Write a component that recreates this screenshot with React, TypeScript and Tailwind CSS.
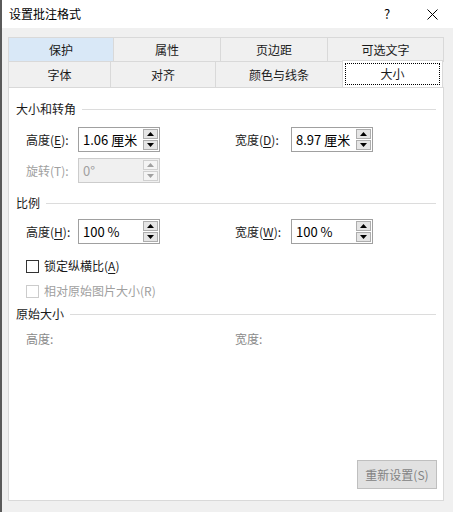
import React from 'react';

const font = { fontFamily: '"Noto Sans CJK SC", "Microsoft YaHei", sans-serif' };

function Spinner({ disabled }: { disabled?: boolean }) {
  const arrow = disabled ? '#a0a0a0' : '#000';
  return (
    <div className="flex flex-col gap-[1px] mr-[1px]">
      {[0, 1].map((i) => (
        <div
          key={i}
          className={`w-[15px] h-[10px] flex items-center justify-center border ${
            disabled ? 'border-[#d0d0d0] bg-[#f4f4f4]' : 'border-[#adadad] bg-[#e5e5e5]'
          }`}
        >
          <svg width="7" height="4" viewBox="0 0 7 4">
            {i === 0 ? (
              <polygon points="3.5,0 7,4 0,4" fill={arrow} />
            ) : (
              <polygon points="0,0 7,0 3.5,4" fill={arrow} />
            )}
          </svg>
        </div>
      ))}
    </div>
  );
}

function SpinInput({ value, disabled }: { value: string; disabled?: boolean }) {
  return (
    <div
      className={`w-[82px] h-[25px] flex items-center justify-between border ${
        disabled ? 'border-[#cccccc] bg-[#f0f0f0] text-[#a0a0a0]' : 'border-[#a0a0a0] bg-white text-black'
      }`}
    >
      <span className="pl-[4px] text-[13px] leading-none">{value}</span>
      <Spinner disabled={disabled} />
    </div>
  );
}

function Label({ text, mn, tail, disabled, w }: { text: string; mn?: string; tail?: string; disabled?: boolean; w: string }) {
  return (
    <span className={`${w} text-[12px] ${disabled ? 'text-[#a0a0a0]' : 'text-[#1a1a1a]'}`}>
      {text}
      {mn && (
        <>
          (<span className="underline underline-offset-2">{mn}</span>):
        </>
      )}
      {tail}
    </span>
  );
}

function GroupHeader({ title }: { title: string }) {
  return (
    <div className="flex items-center gap-[6px] h-[16px]">
      <span className="text-[12px] text-[#1a1a1a]">{title}</span>
      <div className="flex-1 h-px bg-[#dcdcdc]" />
    </div>
  );
}

function Checkbox({ text, mn, disabled }: { text: string; mn?: string; disabled?: boolean }) {
  return (
    <div className="flex items-center gap-[5px] pl-[10px] h-[16px]">
      <div className={`w-[13px] h-[13px] border bg-white ${disabled ? 'border-[#cccccc]' : 'border-[#333333]'}`} />
      <span className={`text-[12px] ${disabled ? 'text-[#a0a0a0]' : 'text-[#1a1a1a]'}`}>
        {text}
        {mn ? (
          <>
            (<span className="underline underline-offset-2">{mn}</span>)
          </>
        ) : null}
      </span>
    </div>
  );
}

const row1 = [
  { t: '保护', w: 'w-[105px]', hover: true },
  { t: '属性', w: 'w-[107px]' },
  { t: '页边距', w: 'w-[107px]' },
  { t: '可选文字', w: 'w-[117px]' },
];
const row2 = [
  { t: '字体', w: 'w-[102px]' },
  { t: '对齐', w: 'w-[105px]' },
  { t: '颜色与线条', w: 'w-[127px]' },
];

export default function App() {
  return (
    <div style={font} className="w-[453px] h-[512px] bg-[#f0f0f0] flex flex-col border-l-2 border-[#5a5a5a] overflow-hidden">
      {/* Title bar */}
      <div className="h-[28px] bg-white flex items-center shrink-0">
        <span className="pl-[7px] text-[12px] text-black flex-1">设置批注格式</span>
        <span className="text-[13px] text-black w-[20px] text-center mr-[30px]">?</span>
        <svg width="11" height="11" viewBox="0 0 11 11" className="mr-[15px]">
          <path d="M0.5 0.5 L10.5 10.5 M10.5 0.5 L0.5 10.5" stroke="#000" strokeWidth="1" />
        </svg>
      </div>

      {/* Tabs */}
      <div className="pl-[6px] pt-[9px]">
        <div className="flex h-[25px]">
          {row1.map((tab) => (
            <div
              key={tab.t}
              className={`${tab.w} flex items-center justify-center text-[12px] text-[#1a1a1a] border border-r-0 last:border-r border-[#d9d9d9] ${
                tab.hover ? 'bg-[#d9e8f7]' : 'bg-[#f0f0f0]'
              }`}
            >
              {tab.t}
            </div>
          ))}
        </div>
        <div className="flex h-[25px]">
          {row2.map((tab) => (
            <div
              key={tab.t}
              className={`${tab.w} flex items-center justify-center text-[12px] text-[#1a1a1a] bg-[#f0f0f0] border-l border-[#d9d9d9]`}
            >
              {tab.t}
            </div>
          ))}
          <div className="w-[101px] h-[27px] -mt-[2px] bg-white border border-b-0 border-[#d9d9d9] p-[2px] relative z-10">
            <div className="h-full border border-dotted border-black flex items-center justify-center text-[12px] text-[#1a1a1a]">
              大小
            </div>
          </div>
        </div>
      </div>

      {/* Panel */}
      <div className="ml-[6px] w-[436px] h-[414px] bg-white border border-[#d9d9d9] px-[7px] pt-[13px] flex flex-col">
        <GroupHeader title="大小和转角" />
        <div className="flex items-center pl-[10px] mt-[10px]">
          <Label text="高度" mn="E" w="w-[52px]" />
          <SpinInput value="1.06 厘米" />
          <div className="w-[75px]" />
          <Label text="宽度" mn="D" w="w-[56px]" />
          <SpinInput value="8.97 厘米" />
        </div>
        <div className="flex items-center pl-[10px] mt-[6px]">
          <Label text="旋转(T):" disabled w="w-[52px]" />
          <SpinInput value="0°" disabled />
        </div>

        <div className="mt-[12px]">
          <GroupHeader title="比例" />
        </div>
        <div className="flex items-center pl-[10px] mt-[8px]">
          <Label text="高度" mn="H" w="w-[52px]" />
          <SpinInput value="100 %" />
          <div className="w-[75px]" />
          <Label text="宽度" mn="W" w="w-[56px]" />
          <SpinInput value="100 %" />
        </div>
        <div className="mt-[14px]">
          <Checkbox text="锁定纵横比" mn="A" />
        </div>
        <div className="mt-[9px]">
          <Checkbox text="相对原始图片大小(R)" disabled />
        </div>

        <div className="mt-[7px]">
          <GroupHeader title="原始大小" />
        </div>
        <div className="flex items-center pl-[10px] mt-[9px] h-[16px]">
          <span className="w-[209px] text-[12px] text-[#8a8a8a]">高度:</span>
          <span className="text-[12px] text-[#8a8a8a]">宽度:</span>
        </div>

        <div className="flex-1" />
        <div className="flex justify-end mb-[11px] mr-[-1px]">
          <div className="w-[80px] h-[29px] bg-[#e1e1e1] border border-[#bfbfbf] flex items-center justify-center text-[12px] text-[#838383]">
            重新设置(S)
          </div>
        </div>
      </div>
    </div>
  );
}
